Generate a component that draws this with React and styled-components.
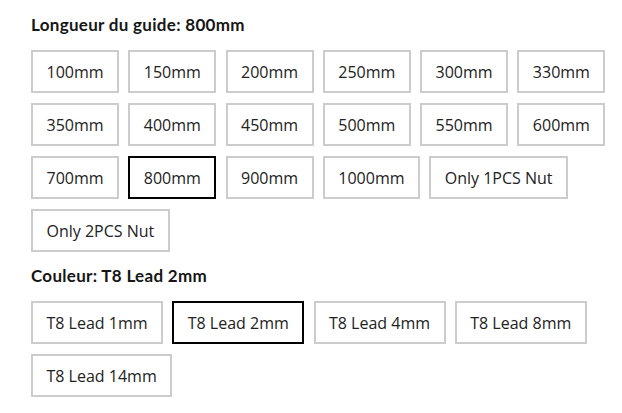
import React from "react";
import styled, { createGlobalStyle } from "styled-components";

const Global = createGlobalStyle`
  html, body { margin: 0; padding: 0; background: #ffffff; }
  body { font-family: "Open Sans", Lato, Arial, sans-serif; color: #1c1c1c; }
`;

const Page = styled.div`
  padding: 15px 0 0 31px;
  display: flex;
  flex-direction: column;
  gap: 14px;
`;

const Section = styled.section`
  display: flex;
  flex-direction: column;
  gap: 15px;
`;

const Label = styled.div`
  font-family: Lato, "Open Sans", Arial, sans-serif;
  font-size: 17px;
  line-height: 20px;
  font-weight: 700;
  letter-spacing: 0.3px;
  color: #161616;
`;

const Options = styled.div`
  display: flex;
  flex-wrap: wrap;
  column-gap: 9.2px;
  row-gap: 10px;
`;

const Option = styled.button`
  box-sizing: border-box;
  height: 43px;
  padding: 0 13.5px;
  display: inline-flex;
  align-items: center;
  justify-content: center;
  background: #ffffff;
  border: 2px solid ${(p) => (p.$selected ? "#000000" : "#cccccc")};
  border-radius: 0;
  font-family: "Open Sans", Lato, Arial, sans-serif;
  font-size: 16px;
  color: #222222;
  white-space: nowrap;
  cursor: pointer;
`;

const lengths = [
  "100mm", "150mm", "200mm", "250mm", "300mm", "330mm",
  "350mm", "400mm", "450mm", "500mm", "550mm", "600mm",
  "700mm", "800mm", "900mm", "1000mm", "Only 1PCS Nut", "Only 2PCS Nut",
];
const colors = ["T8 Lead 1mm", "T8 Lead 2mm", "T8 Lead 4mm", "T8 Lead 8mm", "T8 Lead 14mm"];

export default function App() {
  return (
    <>
      <Global />
      <Page>
        <Section>
          <Label>Longueur du guide: 800mm</Label>
          <Options>
            {lengths.map((l) => (
              <Option key={l} $selected={l === "800mm"}>{l}</Option>
            ))}
          </Options>
        </Section>
        <Section>
          <Label>Couleur: T8 Lead 2mm</Label>
          <Options>
            {colors.map((c) => (
              <Option key={c} $selected={c === "T8 Lead 2mm"}>{c}</Option>
            ))}
          </Options>
        </Section>
      </Page>
    </>
  );
}
